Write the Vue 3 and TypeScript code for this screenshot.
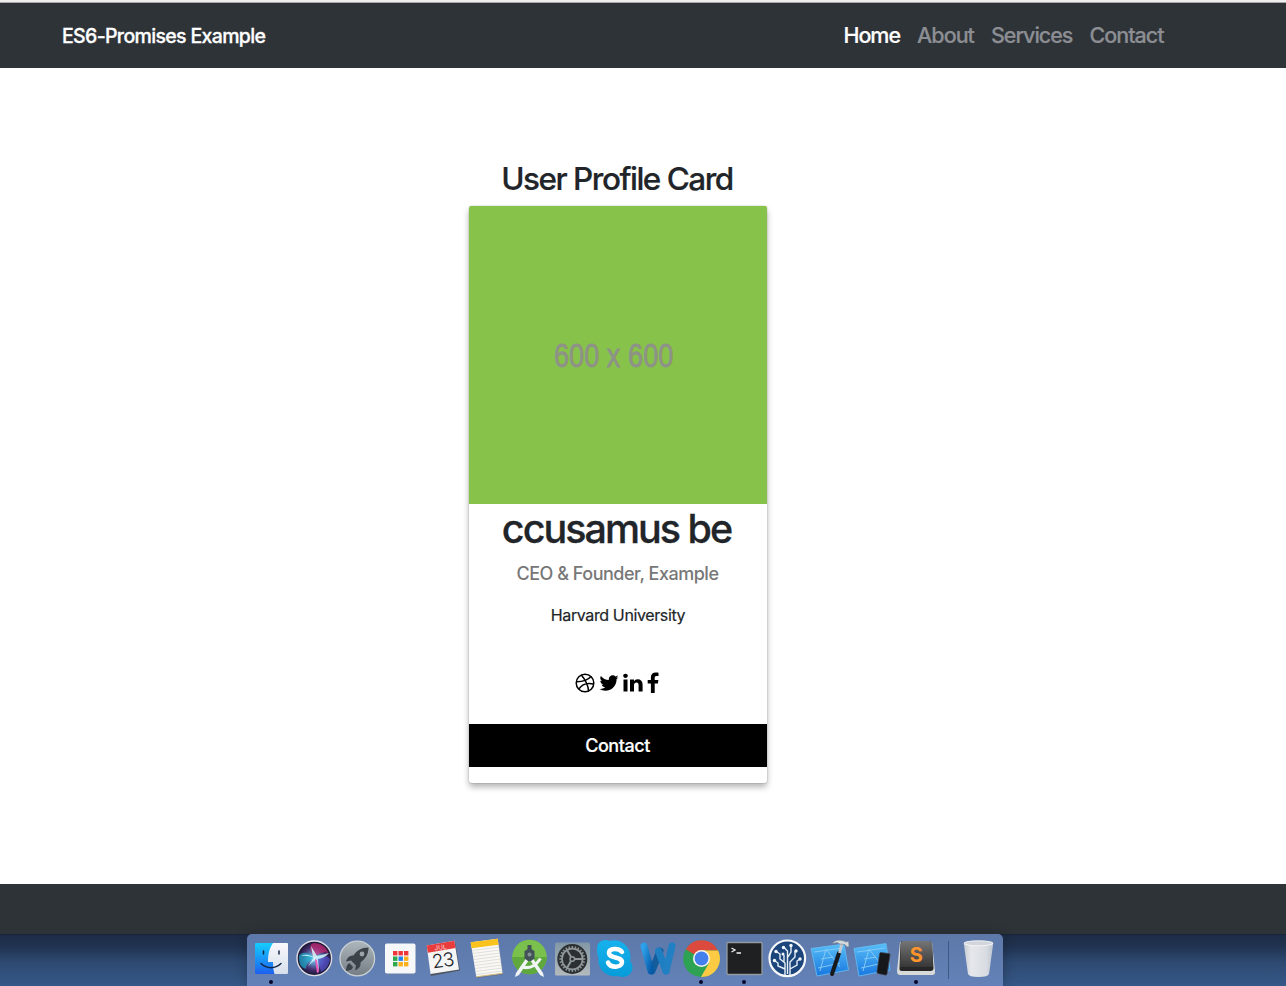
<script setup lang="ts">
interface NavLink {
  label: string
  active: boolean
}

const links: NavLink[] = [
  { label: 'Home', active: true },
  { label: 'About', active: false },
  { label: 'Services', active: false },
  { label: 'Contact', active: false },
]

const tiles: string[] = ['#f0353b', '#f0353b', '#f0353b', '#2fa84f', '#2481f0', '#fbb11c', '#2fa84f', '#fbb11c', '#fbb11c']
const ruled: number[] = [12, 15, 18, 21, 24, 27, 30, 33, 36]
const teeth: number[] = Array.from({ length: 24 }, (_, i) => i * 15)
</script>

<template>
  <div class="page">
    <div class="window-edge"></div>
    <header class="navbar">
      <a class="brand">ES6-Promises Example</a>
      <nav class="links">
        <a v-for="link in links" :key="link.label" :class="['link', { active: link.active }]">{{ link.label }}</a>
      </nav>
    </header>

    <main class="content">
      <h2 class="heading">User Profile Card</h2>
      <article class="card">
        <div class="photo"><span>600 x 600</span></div>
        <h1 class="name">ccusamus be</h1>
        <p class="title">CEO &amp; Founder, Example</p>
        <p class="school">Harvard University</p>
        <div class="social">
          <svg viewBox="0 0 20 20" width="20" height="20">
            <g fill="none" stroke="#000" stroke-width="1.5">
              <circle cx="10" cy="10" r="8.8" />
              <path d="M6.3 2Q12.8 9.5 13.6 18M1.2 8.8Q11.2 9 16 3.6M3.8 16.2Q8.3 8.8 18.7 11" />
            </g>
          </svg>
          <svg viewBox="0 0 1664 1408" width="20" height="17">
            <path d="M1620 176q-67 98-162 167 1 14 1 42 0 130-38 259.500t-115.500 248.500-184.500 210.500-258 146-323 54.500q-271 0-496-145 35 4 78 4 225 0 401-138-105-2-188-64.500t-114-159.500q33 5 61 5 43 0 85-11-112-23-185.500-111.500t-73.500-205.500v-4q68 38 146 41-66-44-105-115t-39-154q0-88 44-163 121 149 294.500 238.500t371.500 99.500q-8-38-8-74 0-134 94.500-228.500t228.500-94.500q140 0 236 102 109-21 205-78-37 115-142 178 93-10 186-50z" />
          </svg>
          <svg viewBox="0 0 20 20" width="20" height="20">
            <path d="M.5 6.500h4v12h-4zM2.500.7c1.400 0 2.300.9 2.300 2.100S3.900 4.900 2.500 4.900.2 4 .2 2.800 1.100.7 2.500.7M7 6.500h4v1.800c.7-1.200 1.900-2.100 3.700-2.100 3 0 4.900 1.900 4.900 5.500v6.800h-4v-6.400c0-1.700-.7-2.700-2.100-2.700-1.500 0-2.500 1-2.500 2.700v6.400H7z" />
          </svg>
          <svg viewBox="0 0 12 22" width="12" height="22">
            <path d="M11.500.7V4H9.500C8 4 7.700 4.700 7.700 5.800V8h3.700l-.5 3.600H7.700V21H3.900v-9.400H.7V8h3.200V5.300C3.900 2.200 5.800.5 8.700.5c1.400 0 2.500.1 2.800.2" />
          </svg>
        </div>
        <button class="contact" type="button">Contact</button>
      </article>
    </main>

    <footer class="footer"></footer>

    <div class="desktop">
      <div class="dock">
        <svg viewBox="0 0 43 52">
          <defs>
            <linearGradient id="finder" x1="0" y1="0" x2="0" y2="1"><stop offset="0" stop-color="#16cdfd" /><stop offset="1" stop-color="#1d60ee" /></linearGradient>
            <linearGradient id="paper" x1="0" y1="0" x2="0" y2="1"><stop offset="0" stop-color="#f7f8fb" /><stop offset="1" stop-color="#d7dfec" /></linearGradient>
          </defs>
          <rect x="6" y="9" width="33" height="31" rx="1" fill="url(#finder)" />
          <path d="M24 9h14a1 1 0 0 1 1 1v29a1 1 0 0 1-1 1H25.500c-1-3-1.500-7-1.500-12h-5c0-8 1.500-14 5-19z" fill="url(#paper)" />
          <path d="M14.500 17v3M30 17v3M12 29.500c6 5.500 14 5.500 20 0" fill="none" stroke="#122746" stroke-width="1.500" stroke-linecap="round" />
          <circle cx="22" cy="48" r="2" fill="#06072b" />
        </svg>
        <svg viewBox="0 0 43 52">
          <defs>
            <radialGradient id="siri"><stop offset="0" stop-color="#d9feff" /><stop offset=".22" stop-color="#63a9d8" /><stop offset=".65" stop-color="#47306f" /><stop offset="1" stop-color="#13132e" /></radialGradient>
          </defs>
          <circle cx="22.300" cy="24.300" r="17.300" fill="url(#siri)" stroke="#dcdce2" stroke-width="1.400" />
          <path d="M22 24C17 15 17 10 22 9c6 0 13 4 14 10-5-2-9 0-14 5z" fill="#d52875" opacity=".65" />
          <path d="M22 24C15 17 10 18 7 22c0 9 2 11 7 13 0-5 3-9 8-11z" fill="#18b9d3" opacity=".65" />
          <path d="M22 24c7-1 12-4 16 1-1 7-4 10-9 13-1-5-2-11-7-14z" fill="#5356d6" opacity=".65" />
          <path d="M9 22q7-1 13 2l-6 8 8-7 3 13-1-13q7-1 11-6l-12 3-6-10 2 11q-6-4-12-1" fill="#d4fcfd" opacity=".85" />
          <path d="m23 25 2 14 2-1-2-12" fill="#f15bbd" />
        </svg>
        <svg viewBox="0 0 43 52">
          <defs><linearGradient id="launch" x1="0" y1="0" x2="0" y2="1"><stop offset="0" stop-color="#acb6bb" /><stop offset="1" stop-color="#747e84" /></linearGradient></defs>
          <circle cx="22.300" cy="24.500" r="17.300" fill="url(#launch)" stroke="#c8cfd3" stroke-width="1.300" />
          <path d="M33.500 13.500c-7 0-12 3-15 8-4 0-6 2-7.500 6l5-1 5 5-1 5c4-2 6-4 5.500-8 5-4 8-8 8-15zM14.500 29c-3 2-3 4-3.500 8 4-.5 6-1 7-4z" fill="#3c4348" />
          <circle cx="27" cy="20" r="2.400" fill="#9ca5aa" />
        </svg>
        <svg viewBox="0 0 43 52">
          <rect x="7" y="10" width="30.500" height="30.500" rx="2" fill="#6d7d9c" opacity=".5" />
          <rect x="7" y="9.500" width="30.500" height="30" rx="1.800" fill="#f6f7f9" />
          <rect v-for="(tile, i) in tiles" :key="i" :x="15 + (i % 3) * 5.500" :y="17 + Math.floor(i / 3) * 5.500" width="4.400" height="4.400" :fill="tile" />
        </svg>
        <svg viewBox="0 0 43 52">
          <path d="m7 14 27-6 5 28.500-29 5.500z" fill="#4f5660" />
          <path d="m5.700 11.500 27.600-4.700L38 35.500 9.500 40z" fill="#f5f5f5" />
          <path d="m5.700 11.500 27.600-4.700 1.200 7.200-27.600 4.700z" fill="#e83d3c" />
          <g transform="rotate(-8 22 24)" font-family="Inter, sans-serif" text-anchor="middle">
            <text x="21" y="15.500" font-size="6.500" fill="#fbdede">JUL</text>
            <text x="21.500" y="33" font-size="19" font-weight="300" letter-spacing="-.8" fill="#20242a">23</text>
          </g>
        </svg>
        <svg viewBox="0 0 43 52">
          <path d="m7 9 27-3.500 5 35-26 3.500z" fill="#67697a" opacity=".6" />
          <path d="m6.700 8.300 27-3.500 4.800 34.500-26.200 3.500z" fill="#f9f8f3" />
          <path d="m6.700 8.300 27-3.500.8 6L7.600 14.300z" fill="#f9c21d" />
          <path v-for="y in ruled" :key="y" :d="`m${6.700 + y * 0.14} ${y + 4.500} 27-3.500`" stroke="#cecfd1" stroke-width=".6" />
          <path d="m12.300 42.800 26.200-3.500" stroke="#d4bd7b" />
        </svg>
        <svg viewBox="0 0 43 52">
          <circle cx="22.500" cy="23" r="17.300" fill="#7ac04d" />
          <path d="M5.200 23a17.300 17.300 0 0 0 34.600 0z" fill="#5fa83d" />
          <path d="M15 33q11 3 18.500-8.500" fill="none" stroke="#f1f5f4" stroke-width="3" />
          <path d="m20 23 3 1.500L12 41l-4 2 1-4zM25 23l-3 1.500L33 41l4 2-1-4z" fill="#f1f4f5" />
          <path d="M20.500 11h4v4.200l3 1.800v7.500l-3.500 2.500h-3L17.500 24.500v-7.500l3-1.800z" fill="#435158" />
          <circle cx="22.500" cy="20.500" r="2" fill="#849397" />
        </svg>
        <svg viewBox="0 0 43 52">
          <defs><linearGradient id="metal" x1="0" y1="0" x2="0" y2="1"><stop offset="0" stop-color="#8197a5" /><stop offset="1" stop-color="#b4babd" /></linearGradient></defs>
          <rect x="5" y="8.500" width="35" height="33" rx="1.500" fill="url(#metal)" />
          <circle cx="22.300" cy="25" r="15" fill="#2b2f32" />
          <g stroke="#8e9698" stroke-width="1.500">
            <path v-for="angle in teeth" :key="angle" d="M22.300 12v2.300" :transform="`rotate(${angle} 22.300 25)`" />
          </g>
          <g fill="none" stroke="#8f979a">
            <circle cx="22.300" cy="25" r="10.300" stroke-width="1.700" />
            <circle cx="22.300" cy="25" r="2.300" stroke-width="1.500" />
            <path d="M24.500 25H33M21 27l-4 7M21 23l-4-7" stroke-width="2" />
          </g>
        </svg>
        <svg viewBox="0 0 43 52">
          <defs><linearGradient id="skype" x1="0" y1="0" x2="0" y2="1"><stop offset="0" stop-color="#16b2ee" /><stop offset="1" stop-color="#079bd9" /></linearGradient></defs>
          <path d="M4 15c0-7 6-11 13-8 9-3 19 4 20.500 14 0 2 0 4-.5 6 7 9-2 19-12 15C14 44 4 35 5.500 24c-1-3-1.500-5-1.500-9z" fill="url(#skype)" />
          <path d="M29 18c-3-4.500-13-4-13 .8 0 6.200 13 3.200 13 9.500 0 5.500-11.500 6-14 .2" fill="none" stroke="#fff" stroke-width="4.500" stroke-linecap="round" />
        </svg>
        <svg viewBox="0 0 43 52">
          <defs><linearGradient id="word" x1="0" y1="0" x2="1" y2="1"><stop offset="0" stop-color="#2da0e9" /><stop offset="1" stop-color="#075aa8" /></linearGradient></defs>
          <g fill="none" stroke-linecap="round" stroke-width="7">
            <path d="m24 17-8 20" stroke="#145d9d" />
            <path d="m22.500 17 7.500 20" stroke="#1d7fc2" />
            <path d="m8 12 7 25" stroke="url(#word)" />
            <path d="m36 12-6 25" stroke="#2180c4" />
          </g>
        </svg>
        <svg viewBox="0 0 43 52">
          <circle cx="22.500" cy="24.700" r="18.300" fill="#2da252" />
          <path d="M22.500 24.700 6.800 15.200A18.300 18.300 0 0 1 39 16.500H22.500z" fill="#dc4a3e" />
          <path d="M22.500 16.500H39a18.300 18.300 0 0 1-17 26.500l8-14z" fill="#fdcb43" />
          <circle cx="22.500" cy="24.500" r="8.500" fill="#f5f4ee" />
          <circle cx="22.500" cy="24.500" r="6.900" fill="#447fee" />
          <circle cx="22" cy="48" r="2" fill="#06072b" />
        </svg>
        <svg viewBox="0 0 43 52">
          <rect x="5" y="8.500" width="35" height="32" rx="1" fill="#1e2021" stroke="#949b9e" stroke-width="1.300" />
          <path d="m9.500 14 3.500 2-3.500 2M14.500 19h4.500" fill="none" stroke="#f1f1f1" stroke-width="1.300" />
          <circle cx="22" cy="48" r="2" fill="#06072b" />
        </svg>
        <svg viewBox="0 0 43 52">
          <circle cx="22.300" cy="24.300" r="17.800" fill="#1c467b" stroke="#f5f7f9" stroke-width="2.200" />
          <g fill="none" stroke="#e8f0f8" stroke-width="1.400">
            <path d="M20 41V29l-5-4v-5l-3-2M20 35l-7-3v-3l-3-2M25 41V28l5-5v-6M25 35l7-4v-4l3-2M22.500 40V17l-3-3M23 23l3-5v-6M19 28v-7" />
          </g>
          <g fill="#f4f7fa">
            <circle cx="11" cy="17.500" r="1.700" /><circle cx="9.500" cy="26.500" r="1.700" /><circle cx="18.500" cy="13.500" r="1.700" />
            <circle cx="26" cy="11.500" r="1.700" /><circle cx="31" cy="17" r="1.700" /><circle cx="35" cy="25" r="1.700" /><circle cx="18" cy="20" r="1.500" />
          </g>
        </svg>
        <svg viewBox="0 0 43 52">
          <defs><linearGradient id="blueprint" x1="0" y1="0" x2="0" y2="1"><stop offset="0" stop-color="#57bef8" /><stop offset="1" stop-color="#1877df" /></linearGradient></defs>
          <path d="m3 14.500 33-4.500 4.500 26L9 42z" fill="url(#blueprint)" stroke="#67bff2" stroke-width=".8" />
          <path d="m12 37 6-22 14 18M10 34l22-5M13 25l12-2M6 18l29-4" fill="none" stroke="#8bcdf5" stroke-width=".9" />
          <path d="m31 19-7 21" stroke="#17191d" stroke-width="4" stroke-linecap="round" />
          <path d="m31.500 19 2.500-10" stroke="#c4c9cd" stroke-width="3" />
          <path d="M24.500 9.500c2-3.500 7-4 11-2.500l3 1 2-1 .5 5.500-2 .5-2-2.500-5-.5-3-1.500z" fill="#d5dadd" stroke="#7b8790" stroke-width=".6" />
        </svg>
        <svg viewBox="0 0 43 52">
          <path d="m3 14.500 32-5 4 26.500L8 42z" fill="url(#blueprint)" stroke="#67bff2" stroke-width=".8" />
          <path d="m12 37 6-22 14 18M10 34l22-5M13 25l12-2M6 18l28-4" fill="none" stroke="#8bcdf5" stroke-width=".9" />
          <path d="m29.500 18.500 8.500 1q1 0 1 1.500L36 40q-.5 1.500-2 1l-7-1.500q-1.500-.5-1-2l2.500-17q.2-2 1-2z" fill="#15171b" stroke="#40434b" stroke-width=".7" />
        </svg>
        <svg viewBox="0 0 43 52">
          <defs><linearGradient id="key" x1="0" y1="0" x2="0" y2="1"><stop offset="0" stop-color="#757575" /><stop offset="1" stop-color="#373737" /></linearGradient></defs>
          <path d="M6 8 3 37q0 4 3 4h32q3.500 0 3-4L38 8z" fill="#d8dad9" />
          <path d="M9 7h26q2.500 0 3 3l1.500 24q0 3-3 3H8q-3 0-2.500-3L6.500 10q0-3 2.500-3z" fill="#262626" />
          <path d="M9 7h26q2.500 0 3 3l1 23H6L7 10q0-3 2-3z" fill="url(#key)" />
          <text x="22.200" y="27.500" font-family="Inter, sans-serif" font-size="20" font-weight="700" text-anchor="middle" fill="#ff942c">S</text>
          <circle cx="22" cy="48" r="2" fill="#06072b" />
        </svg>
        <div class="divider"></div>
        <svg viewBox="0 0 43 52">
          <defs><linearGradient id="bin" x1="0" y1="0" x2="1" y2="0"><stop offset="0" stop-color="#c6cbd2" /><stop offset=".25" stop-color="#e5e7eb" /><stop offset=".75" stop-color="#d9dde3" /><stop offset="1" stop-color="#bec5cf" /></linearGradient></defs>
          <path d="m6.700 9 4.300 31q1 3 10.500 3T32 40l4.300-31z" fill="url(#bin)" />
          <ellipse cx="21.500" cy="9.300" rx="14.500" ry="2.500" fill="#d2d6dc" stroke="#f3f4f5" />
        </svg>
      </div>
    </div>
  </div>
</template>

<style>
body {
  margin: 0;
  overflow: hidden;
}
</style>

<style scoped>
.page {
  display: flex;
  flex-direction: column;
  width: 1286px;
  height: 986px;
  overflow: hidden;
  background: #fff;
  color: #212529;
  font-family: Inter, "Liberation Sans", sans-serif;
}
.window-edge {
  box-sizing: border-box;
  height: 3px;
  flex: none;
  background: #eeeeef;
  border-bottom: 1px solid #aaa6aa;
}
.navbar {
  box-sizing: border-box;
  display: flex;
  align-items: center;
  justify-content: space-between;
  height: 65px;
  flex: none;
  padding: 0 122.500px 0 62px;
  background: #2e3338;
  white-space: nowrap;
}
.brand {
  color: #fff;
  font-size: 19.500px;
  font-weight: 500;
  letter-spacing: -0.660px;
  -webkit-text-stroke: 0.300px;
}
.links {
  display: flex;
  gap: 17px;
  padding-bottom: 2px;
  font-size: 21.500px;
  letter-spacing: -1px;
  -webkit-text-stroke: 0.200px;
}
.link {
  color: #8c8e93;
  font-weight: 500;
}
.link.active {
  color: #fff;
}
.content {
  display: flex;
  flex-direction: column;
  align-items: center;
  box-sizing: border-box;
  width: 1236px;
  height: 816px;
  flex: none;
  padding-top: 91px;
}
.heading {
  margin: 0 0 7px;
  padding-right: 2px;
  font-size: 31.500px;
  font-weight: 500;
  line-height: 40px;
  letter-spacing: -1.500px;
  -webkit-text-stroke: 0.200px;
}
.card {
  display: flex;
  flex-direction: column;
  align-items: center;
  width: 298px;
  height: 577px;
  border-radius: 3px;
  box-shadow: 0 0 0 1px rgba(0, 0, 0, 0.060), 0 4px 6px rgba(0, 0, 0, 0.300);
  white-space: nowrap;
}
.photo {
  display: flex;
  align-items: center;
  justify-content: center;
  box-sizing: border-box;
  width: 298px;
  height: 298px;
  padding: 1px 8px 0 0;
  border-radius: 2px 2px 0 0;
  background: #87c34a;
  color: #8e9287;
  font-family: "Liberation Sans", sans-serif;
  font-size: 34px;
  -webkit-text-stroke: 0.800px;
}
.photo span {
  transform: scaleX(0.800);
}
.name {
  margin: 1px 0 0;
  padding-right: 3px;
  font-size: 39.500px;
  font-weight: 500;
  line-height: 48px;
  letter-spacing: -2px;
  -webkit-text-stroke: 0.300px;
}
.title {
  margin: 7px 0 0;
  padding-right: 1px;
  color: #777;
  font-size: 18px;
  font-weight: 500;
  line-height: 27px;
  letter-spacing: -0.480px;
}
.school {
  margin: 16px 0 0;
  font-size: 16px;
  line-height: 24px;
  letter-spacing: -0.380px;
  -webkit-text-stroke: 0.200px;
}
.social {
  display: flex;
  align-items: center;
  gap: 4px;
  height: 22px;
  margin-top: 45px;
  padding-right: 2px;
}
.contact {
  width: 298px;
  height: 43px;
  margin-top: 30px;
  padding: 0 1px 0 0;
  border: 0;
  background: #000;
  color: #fff;
  font-family: inherit;
  font-size: 18px;
  font-weight: 500;
  letter-spacing: -0.450px;
  -webkit-text-stroke: 0.200px;
}
.footer {
  height: 50px;
  flex: none;
  background: #2e3337;
}
.desktop {
  display: flex;
  justify-content: center;
  height: 52px;
  flex: none;
  box-sizing: border-box;
  padding-right: 36px;
  background: linear-gradient(#172338 0, #1e2d47 2px, #20324f 12px, #2d4971 28px, #365887 52px);
}
.dock {
  display: flex;
  box-sizing: border-box;
  width: 756px;
  height: 52px;
  padding-left: 2px;
  border-radius: 5px 5px 0 0;
  background: linear-gradient(#5d78a9, #6482b8);
  box-shadow: 0 0 12px rgba(20, 25, 40, 0.400);
}
.dock svg {
  width: 43px;
  height: 52px;
  flex: none;
}
.divider {
  width: 1px;
  height: 38px;
  margin: 7px 8px 0 11px;
  flex: none;
  background: #3d5885;
}
</style>
